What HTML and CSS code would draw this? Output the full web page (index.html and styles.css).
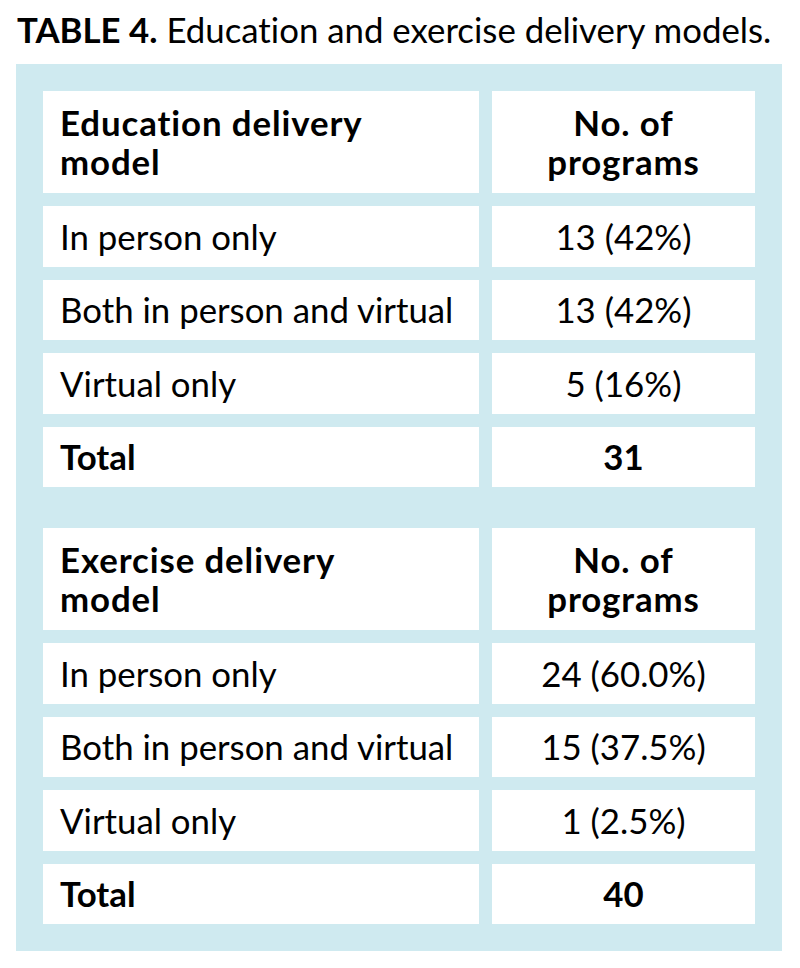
FILE: index.html
```html
<!DOCTYPE html>
<html>
<head>
<meta charset="utf-8">
<link rel="stylesheet" href="styles.css">
</head>
<body>
<div class="title"><b>TABLE 4.</b> Education and exercise delivery models.</div>
<div class="panel">
  <div class="tbl">
    <div class="cell head">Education delivery<br>model</div>
    <div class="cell head num">No. of<br>programs</div>
    <div class="cell">In person only</div>
    <div class="cell num">13 (42%)</div>
    <div class="cell">Both in person and virtual</div>
    <div class="cell num">13 (42%)</div>
    <div class="cell">Virtual only</div>
    <div class="cell num">5 (16%)</div>
    <div class="cell bold">Total</div>
    <div class="cell num bold">31</div>
  </div>
  <div class="tbl">
    <div class="cell head">Exercise delivery<br>model</div>
    <div class="cell head num">No. of<br>programs</div>
    <div class="cell">In person only</div>
    <div class="cell num">24 (60.0%)</div>
    <div class="cell">Both in person and virtual</div>
    <div class="cell num">15 (37.5%)</div>
    <div class="cell">Virtual only</div>
    <div class="cell num">1 (2.5%)</div>
    <div class="cell bold">Total</div>
    <div class="cell num bold">40</div>
  </div>
</div>
</body>
</html>
```
FILE: styles.css
```css
html, body {
  margin: 0;
  padding: 0;
  background: #ffffff;
}
body {
  font-family: Lato, "Open Sans", sans-serif;
  font-variant-ligatures: none;
  color: #000;
}
.title {
  font-size: 34.8px;
  line-height: 40px;
  padding: 10px 0 0 17px;
  height: 54px;
  box-sizing: border-box;
  white-space: nowrap;
}
.title b {
  font-weight: 700;
}
.panel {
  margin: 10px 0 0 16px;
  width: 766px;
  box-sizing: border-box;
  padding: 27px;
  background: #cfeaf0;
  display: flex;
  flex-direction: column;
  gap: 41px;
}
.tbl {
  display: grid;
  grid-template-columns: 436px 263px;
  grid-template-rows: 102px repeat(4, 60.5px);
  column-gap: 13px;
  row-gap: 13px;
}
.cell {
  background: #ffffff;
  display: flex;
  align-items: center;
  padding: 0 17px;
  font-size: 34.8px;
  line-height: 39px;
  white-space: nowrap;
}
.head, .bold {
  font-weight: 700;
}
.head {
  letter-spacing: 0.9px;
}
.num {
  justify-content: center;
  text-align: center;
}
```
